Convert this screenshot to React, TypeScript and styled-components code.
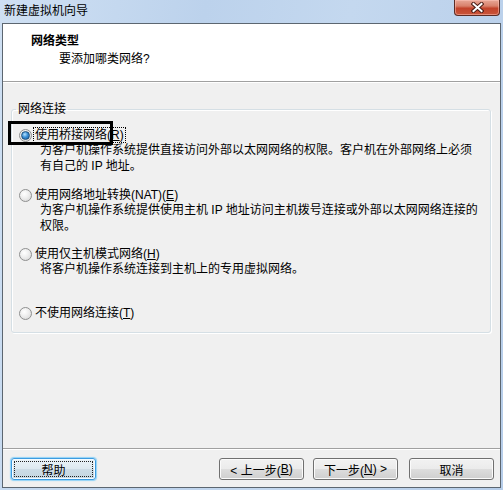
import * as React from 'react';
import styled, { createGlobalStyle } from 'styled-components';

const GlobalStyle = createGlobalStyle`
    html, body {
        margin: 0;
        padding: 0;
        width: 503px;
        height: 490px;
        overflow: hidden;
        background: #bfd4ec;
    }
    * {
        box-sizing: border-box;
    }
`

const FONT = `"Liberation Sans", "Noto Sans CJK SC", sans-serif`

const Window = styled.div`
    width: 503px;
    height: 490px;
    display: flex;
    flex-direction: column;
    padding: 0 2px 2px 2px;
    background: linear-gradient(100deg, #cfe0f3 0%, #bcd2ec 35%, #c4d8ef 60%, #b6cde9 100%);
    font-family: ${FONT};
    font-size: 12px;
    color: #000;
`

const TitleBar = styled.div`
    height: 23px;
    display: flex;
    justify-content: space-between;
    align-items: flex-start;
    padding-left: 2px;
`

const TitleText = styled.div`
    line-height: 22px;
    font-size: 12px;
`

const CloseButton = styled.div`
    width: 46px;
    height: 16px;
    margin-right: 1px;
    display: flex;
    align-items: center;
    justify-content: center;
    border: 1px solid #5b2b24;
    border-top: none;
    border-radius: 0 0 4px 4px;
    background: linear-gradient(#e8a797 0%, #d9816c 40%, #c2432b 55%, #c9553a 100%);
    box-shadow: inset 0 0 0 1px rgba(255, 200, 190, 0.5);
`

const Client = styled.div`
    flex: 1;
    display: flex;
    flex-direction: column;
    border: 1px solid #5c6670;
    background: #f0f0f0;
`

const Header = styled.div`
    height: 58px;
    padding: 8px 0 0 28px;
    background: #fff;
    border-bottom: 1px solid #a0a0a0;
`

const HeaderTitle = styled.div`
    font-weight: bold;
    line-height: 18px;
`

const HeaderSub = styled.div`
    line-height: 18px;
    padding-left: 28px;
`

const Body = styled.div`
    flex: 1;
    padding: 19px 9px 0 8px;
    border-top: 1px solid #fff;
`

const Group = styled.fieldset`
    margin: 0;
    padding: 0;
    border: 1px solid #d5dfe5;
    border-radius: 3px;
    box-shadow: inset 1px 1px 0 #fff, 1px 1px 0 #fff;
`

const Legend = styled.legend`
    margin-left: 4px;
    padding: 0 2px;
    line-height: 14px;
    font-size: 12px;
`

const Options = styled.div`
    display: flex;
    flex-direction: column;
    padding: 12px 0 12px 7px;
`

const Option = styled.div<{ $gap: number }>`
    margin-top: ${p => p.$gap}px;
    display: flex;
    flex-direction: column;
`

const RadioRow = styled.div`
    position: relative;
    height: 14px;
    display: flex;
    align-items: center;
`

const RadioCircle = styled.span<{ $checked?: boolean }>`
    width: 13px;
    height: 13px;
    border-radius: 50%;
    border: 1px solid #8e8f8f;
    background: radial-gradient(circle at 40% 35%, #ffffff 0%, #f0f0f0 40%, #d3d3d3 100%);
    display: flex;
    align-items: center;
    justify-content: center;
    flex: none;
    &::after {
        content: '';
        display: ${p => (p.$checked ? 'block' : 'none')};
        width: 7px;
        height: 7px;
        border-radius: 50%;
        border: 1px solid #1f4f7a;
        background: radial-gradient(circle at 40% 35%, #b6e2ff 0%, #3a8fd6 45%, #145aa0 100%);
    }
`

const RadioLabel = styled.span<{ $focused?: boolean }>`
    margin-left: 2px;
    padding: 0 1px;
    line-height: 14px;
    outline: ${p => (p.$focused ? '1px dotted #000' : 'none')};
`

const Marker = styled.div`
    position: absolute;
    left: -11px;
    top: -7px;
    width: 105px;
    height: 24px;
    border: 3px solid #000;
    pointer-events: none;
`

const Desc = styled.div`
    margin-left: 21px;
    line-height: 16px;
`

const Footer = styled.div`
    height: 39px;
    display: flex;
    align-items: flex-start;
    padding: 9px 6px 0 8px;
    border-top: 1px solid #a0a0a0;
    box-shadow: inset 0 1px 0 #fff;
`

const Spacer = styled.div`
    flex: 1;
`

const Button = styled.button<{ $default?: boolean; $ml?: number }>`
    width: 85px;
    height: 22px;
    margin-left: ${p => p.$ml ?? 0}px;
    padding: 0;
    font-family: ${FONT};
    font-size: 12px;
    color: #000;
    border-radius: 3px;
    border: 1px solid ${p => (p.$default ? '#3c9be0' : '#707070')};
    background: ${p => p.$default
        ? 'linear-gradient(#eaf3f8 0%, #dde9f0 50%, #cddce6 51%, #c5d7e2 100%)'
        : 'linear-gradient(#f2f2f2 0%, #ebebeb 50%, #dddddd 51%, #cfcfcf 100%)'};
    box-shadow: ${p => p.$default ? '0 0 1px 1px #8fd2f7, inset 0 0 0 1px #f4fbff' : 'inset 0 0 0 1px #fbfbfb'};
    display: flex;
    align-items: center;
    justify-content: center;
    position: relative;
    &::after {
        content: '';
        display: ${p => (p.$default ? 'block' : 'none')};
        position: absolute;
        inset: 2px;
        border: 1px dotted #222;
        border-radius: 1px;
    }
`

const XIcon = () => (
    <svg width="13" height="11" viewBox="0 0 13 11">
        <path d="M2.5 2 L10.5 9 M10.5 2 L2.5 9" stroke="#4a1d16" strokeWidth="4" strokeLinecap="square" />
        <path d="M2.5 2 L10.5 9 M10.5 2 L2.5 9" stroke="#ffffff" strokeWidth="2" strokeLinecap="square" />
    </svg>
)

export default function App() {
    return (
        <>
            <GlobalStyle />
            <Window>
                <TitleBar>
                    <TitleText>新建虚拟机向导</TitleText>
                    <CloseButton><XIcon /></CloseButton>
                </TitleBar>
                <Client>
                    <Header>
                        <HeaderTitle>网络类型</HeaderTitle>
                        <HeaderSub>要添加哪类网络?</HeaderSub>
                    </Header>
                    <Body>
                        <Group>
                            <Legend>网络连接</Legend>
                            <Options>
                                <Option $gap={0}>
                                    <RadioRow>
                                        <RadioCircle $checked />
                                        <RadioLabel $focused>使用桥接网络(<u>R</u>)</RadioLabel>
                                        <Marker />
                                    </RadioRow>
                                    <Desc>
                                        为客户机操作系统提供直接访问外部以太网网络的权限。客户机在外部网络上必须<br />
                                        有自己的 IP 地址。
                                    </Desc>
                                </Option>
                                <Option $gap={14}>
                                    <RadioRow>
                                        <RadioCircle />
                                        <RadioLabel>使用网络地址转换(NAT)(<u>E</u>)</RadioLabel>
                                    </RadioRow>
                                    <Desc>
                                        为客户机操作系统提供使用主机 IP 地址访问主机拨号连接或外部以太网网络连接的<br />
                                        权限。
                                    </Desc>
                                </Option>
                                <Option $gap={13}>
                                    <RadioRow>
                                        <RadioCircle />
                                        <RadioLabel>使用仅主机模式网络(<u>H</u>)</RadioLabel>
                                    </RadioRow>
                                    <Desc>将客户机操作系统连接到主机上的专用虚拟网络。</Desc>
                                </Option>
                                <Option $gap={29}>
                                    <RadioRow>
                                        <RadioCircle />
                                        <RadioLabel>不使用网络连接(<u>T</u>)</RadioLabel>
                                    </RadioRow>
                                </Option>
                            </Options>
                        </Group>
                    </Body>
                    <Footer>
                        <Button $default>帮助</Button>
                        <Spacer />
                        <Button>&lt; 上一步(<u>B</u>)</Button>
                        <Button $ml={9}>下一步(<u>N</u>) &gt;</Button>
                        <Button $ml={11}>取消</Button>
                    </Footer>
                </Client>
            </Window>
        </>
    );
}
